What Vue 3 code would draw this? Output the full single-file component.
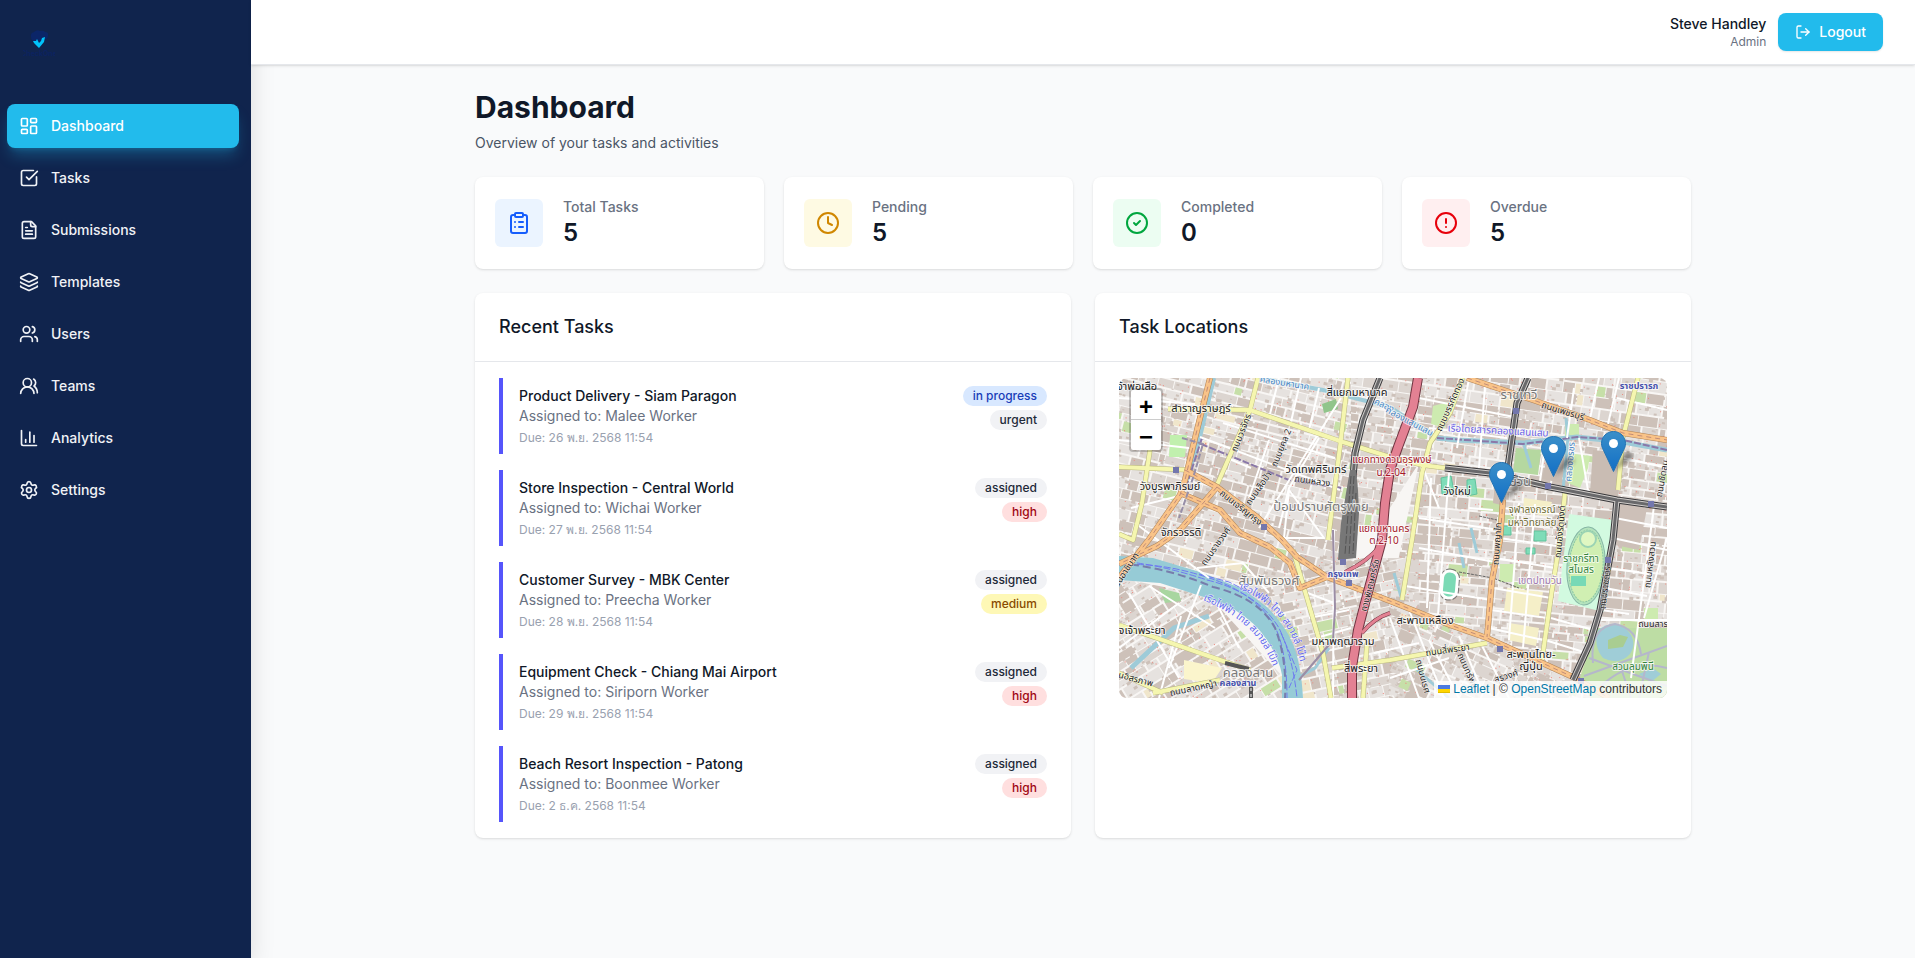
<script setup>
const nav = [
  { name: 'Dashboard', paths: ['M4 3h5a1 1 0 0 1 1 1v7a1 1 0 0 1-1 1H4a1 1 0 0 1-1-1V4a1 1 0 0 1 1-1z', 'M15 3h5a1 1 0 0 1 1 1v3a1 1 0 0 1-1 1h-5a1 1 0 0 1-1-1V4a1 1 0 0 1 1-1z', 'M15 12h5a1 1 0 0 1 1 1v7a1 1 0 0 1-1 1h-5a1 1 0 0 1-1-1v-7a1 1 0 0 1 1-1z', 'M4 16h5a1 1 0 0 1 1 1v3a1 1 0 0 1-1 1H4a1 1 0 0 1-1-1v-3a1 1 0 0 1 1-1z'] },
  { name: 'Tasks', paths: ['M21 10.656V19a2 2 0 0 1-2 2H5a2 2 0 0 1-2-2V5a2 2 0 0 1 2-2h12.344', 'm9 11 3 3L22 4'] },
  { name: 'Submissions', paths: ['M15 2H6a2 2 0 0 0-2 2v16a2 2 0 0 0 2 2h12a2 2 0 0 0 2-2V7Z', 'M14 2v4a2 2 0 0 0 2 2h4', 'M10 9H8', 'M16 13H8', 'M16 17H8'] },
  { name: 'Templates', paths: ['M12.83 2.18a2 2 0 0 0-1.66 0L2.6 6.08a1 1 0 0 0 0 1.83l8.58 3.91a2 2 0 0 0 1.66 0l8.58-3.9a1 1 0 0 0 0-1.83z', 'M2 12a1 1 0 0 0 .58.91l8.6 3.91a2 2 0 0 0 1.65 0l8.58-3.9A1 1 0 0 0 22 12', 'M2 17a1 1 0 0 0 .58.91l8.6 3.91a2 2 0 0 0 1.65 0l8.58-3.9A1 1 0 0 0 22 17'] },
  { name: 'Users', paths: ['M16 21v-2a4 4 0 0 0-4-4H6a4 4 0 0 0-4 4v2', 'M13 7a4 4 0 1 1-8 0 4 4 0 0 1 8 0z', 'M22 21v-2a4 4 0 0 0-3-3.87', 'M16 3.13a4 4 0 0 1 0 7.75'] },
  { name: 'Teams', paths: ['M18 21a8 8 0 0 0-16 0', 'M15 8a5 5 0 1 1-10 0 5 5 0 0 1 10 0z', 'M22 20c0-3.37-2-6.5-4-8a5 5 0 0 0-.45-8.3'] },
  { name: 'Analytics', paths: ['M3 3v16a2 2 0 0 0 2 2h16', 'M18 17V9', 'M13 17V5', 'M8 17v-3'] },
  { name: 'Settings', paths: ['M9.671 4.136a2.34 2.34 0 0 1 4.659 0 2.34 2.34 0 0 0 3.319 1.915 2.34 2.34 0 0 1 2.33 4.033 2.34 2.34 0 0 0 0 3.831 2.34 2.34 0 0 1-2.33 4.033 2.34 2.34 0 0 0-3.319 1.915 2.34 2.34 0 0 1-4.659 0 2.34 2.34 0 0 0-3.32-1.915 2.34 2.34 0 0 1-2.33-4.033 2.34 2.34 0 0 0 0-3.831A2.34 2.34 0 0 1 6.35 6.051a2.34 2.34 0 0 0 3.319-1.915', 'M15 12a3 3 0 1 1-6 0 3 3 0 0 1 6 0z'] },
]

const circle = 'M22 12a10 10 0 1 1-20 0 10 10 0 0 1 20 0z'
const stats = [
  { label: 'Total Tasks', value: 5, tone: 'blue', paths: ['M9 2h6a1 1 0 0 1 1 1v2a1 1 0 0 1-1 1H9a1 1 0 0 1-1-1V3a1 1 0 0 1 1-1z', 'M16 4h2a2 2 0 0 1 2 2v14a2 2 0 0 1-2 2H6a2 2 0 0 1-2-2V6a2 2 0 0 1 2-2h2', 'M12 11h4', 'M12 16h4', 'M8 11h.01', 'M8 16h.01'] },
  { label: 'Pending', value: 5, tone: 'amber', paths: [circle, 'M12 6v6l4 2'] },
  { label: 'Completed', value: 0, tone: 'green', paths: [circle, 'm9 12 2 2 4-4'] },
  { label: 'Overdue', value: 5, tone: 'red', paths: [circle, 'M12 8v4', 'M12 16h.01'] },
]

const tasks = [
  { title: 'Product Delivery - Siam Paragon', who: 'Malee Worker', due: '26 พ.ย. 2568 11:54', status: 'in progress', statusTone: 'blue', priority: 'urgent', tone: 'gray' },
  { title: 'Store Inspection - Central World', who: 'Wichai Worker', due: '27 พ.ย. 2568 11:54', status: 'assigned', statusTone: 'gray', priority: 'high', tone: 'red' },
  { title: 'Customer Survey - MBK Center', who: 'Preecha Worker', due: '28 พ.ย. 2568 11:54', status: 'assigned', statusTone: 'gray', priority: 'medium', tone: 'yellow' },
  { title: 'Equipment Check - Chiang Mai Airport', who: 'Siriporn Worker', due: '29 พ.ย. 2568 11:54', status: 'assigned', statusTone: 'gray', priority: 'high', tone: 'red' },
  { title: 'Beach Resort Inspection - Patong', who: 'Boonmee Worker', due: '2 ธ.ค. 2568 11:54', status: 'assigned', statusTone: 'gray', priority: 'high', tone: 'red' },
]

// City fabric: deterministic building footprints laid on a rotated street grid per district.
let seed = 7
const rnd = () => {
  seed = (seed * 16807) % 2147483647
  return seed / 2147483647
}
function fabric(w, h) {
  const out = { a: '', b: '', c: '', green: '', pink: '', mint: '' }
  let y = -h
  while (y < h) {
    const rowH = 6 + Math.floor(rnd() * 6)
    let x = -w
    while (x < w) {
      const colW = 5 + Math.floor(rnd() * 17)
      const cell = `M${x} ${y}h${colW}v${rowH}h${-colW}z`
      const r = rnd()
      if (r < 0.34) out.a += cell
      else if (r < 0.62) out.b += cell
      else if (r < 0.93) out.c += cell
      else if (r < 0.97) out.green += cell
      else out.mint += cell
      for (let i = 0; i < 3; i++) {
        const px = (x + rnd() * colW).toFixed(1)
        const py = (y + rnd() * rowH).toFixed(1)
        const s = 1 + Math.floor(rnd() * 3)
        if (rnd() < 0.3) out.pink += `M${px} ${py}h1v1h-1z`
        else out.a += `M${px} ${py}h${s + 1}v${s}h${-s - 1}z`
      }
      x += colW + 1 + Math.floor(rnd() * 2)
    }
    y += rowH + 1 + Math.floor(rnd() * 2)
  }
  return out
}
const districts = [
  { id: 'nw', clip: 'M0 0H232V190L120 205 0 180Z', at: 'translate(110 90) rotate(14)', f: fabric(150, 130) },
  { id: 'sw', clip: 'M0 200L90 218 165 300V320H0Z', at: 'translate(70 260) rotate(-32)', f: fabric(110, 100) },
  { id: 'mid', clip: 'M120 210L232 180H300V320H184Q175 240 120 210Z', at: 'translate(220 260) rotate(-12)', f: fabric(110, 90) },
  { id: 'ne', clip: 'M232 0H548V125L300 85 232 190Z', at: 'translate(400 60) rotate(8)', f: fabric(180, 110) },
  { id: 'se', clip: 'M300 85L548 125V320H460L270 225Z', at: 'translate(420 200) rotate(5)', f: fabric(160, 140) },
  { id: 's', clip: 'M270 225L460 303V320H270Z', at: 'translate(350 290) rotate(24)', f: fabric(110, 70) },
]

const lanes = [
  'M0 20L76 26M0 62L70 70M12 130L60 118M16 145L90 200M81 59L221 112M104 45L216 80M160 0L150 40M182 0L172 44M200 10L190 52M222 20L140 150',
  'M200 60L170 110 160 150M170 112L205 160 165 160 170 112M150 62L130 120M108 80L132 90M78 190L124 185 150 215M62 238L40 320M82 207L50 290',
  'M10 215L60 300M30 208L96 250M0 270L60 225M96 222L120 270M186 214L215 225M190 240L230 232M190 262L232 250M215 152L214 320',
  'M300 20L400 40M310 50L388 60M350 0L338 70M366 8L360 90M300 80L320 130M312 100L308 230M330 95L318 250M350 130L374 132M300 140L380 152M300 170L376 184M286 208L372 222',
  'M384 130L440 136M380 160L438 168M376 180L436 190M374 210L432 220M372 232L428 240M370 250L424 262M400 125L390 262M416 126L404 270M425 75L420 110M460 60L470 118M455 10L448 60M480 0L470 45M500 0L488 50',
  'M498 20L548 32M505 80L548 90M496 140L548 150M494 160L548 172M490 190L530 196M486 210L528 218M482 232L510 236M535 128L512 300M548 160L525 240M478 242H548M432 240L474 252M426 262L468 275',
  'M271 240L300 320M290 232L325 320M310 262L340 320M340 258L362 310M271 300L330 280M360 262L390 320M255 275L300 265',
]
const yellow = [
  'M49 31L131 32 224 64 271 79 303 87 326 90', 'M139 0L131 32 98 107', 'M229 0L221 69 209 162', 'M0 89L71 92', 'M31 72L23 125 14 162 0 156',
  'M344 0L331 35 311 65 303 95 293 162 283 222', 'M446 115L441 162 433 212 423 282', 'M519 0L504 59 499 112', 'M0 247L101 282 131 292',
  'M0 295L44 315M34 315L101 302', 'M174 172L204 275 212 320', 'M213 290L271 282 368 265', 'M248 265L244 320',
]
const orange = [
  'M91 0L78 52 66 102 61 117 31 160 0 200', 'M66 92L98 109 138 139 163 162 178 179 208 199 271 223 331 247 368 260 421 284 454 299 490 320',
  'M98 109L61 152 38 168 0 186', 'M61 115L101 132 121 155 151 169 171 185 181 210 208 199', 'M348 0L414 22 471 42 504 55 548 62', 'M384 122L381 162 373 202 368 259',
]
const motorway = ['M299 0L294 29 279 69 271 92 266 125 263 162 254 195 246 225 239 252 233 289V320', 'M271 235Q255 240 243 255M261 168Q248 184 226 194']
const elevated = [
  'M409 0L398 25 391 75 388 96', 'M326 90L371 95 431 109 498 122 548 129', 'M498 122L494 162 481 232 471 265 454 302', 'M261 0L244 42 236 75 234 100',
]
const stations = [[57, 92], [145, 149], [397, 33], [429, 108], [532, 126], [224, 184], [230, 205], [489, 182], [381, 271], [462, 303]]

const labels = [
  ['จ้าพ่อเสือ', 18, 12, 'place'], ['สำราญราษฎร์', 82, 34, 'place'], ['สี่แยกมหานาค', 238, 18, 'place'], ['วัดเทพศิรินทร์', 197, 95, 'place'],
  ['วังบูรพาภิรมย์', 51, 112, 'place'], ['จักรวรรดิ', 62, 158, 'place'], ['วังใหม่', 338, 117, 'place'], ['มหาพฤฒาราม', 224, 267, 'place'],
  ['สี่พระยา', 242, 294, 'place'], ['จเจ้าพระยา', 23, 256, 'place'], ['สะพานเหลือง', 306, 246, 'place'], ['สะพานไทย-', 412, 280, 'place'], ['ญี่ปุ่น', 412, 292, 'place'],
  ['ป้อมปราบศัตรูพ่าย', 202, 133, 'area'], ['ราชเทวี', 400, 21, 'area'], ['ปทุมวัน', 393, 108, 'area'], ['สัมพันธวงศ์', 150, 207, 'area'], ['คลองสาน', 129, 299, 'area'],
  ['แยกทางด่วนอุรุพงษ์', 273, 85, 'exit'], ['น.2-04', 272, 98, 'exit'], ['แยกมหานคร', 265, 154, 'exit'], ['ต.2-10', 265, 166, 'exit'],
  ['ราชปรารภ', 520, 11, 'station'], ['กรุงเทพ', 224, 199, 'station'], ['คลองสาน', 119, 308, 'station'],
  ['จุฬาลงกรณ์', 413, 135, 'campus'], ['มหาวิทยาลัย', 413, 148, 'campus'], ['ราชกรีฑา', 462, 184, 'park'], ['สโมสร', 462, 195, 'park'], ['สวนลุมพินี', 514, 292, 'park'],
  ['เขตปทุมวัน', 421, 206, 'district'],
  ['คลองมหานาค', 165, 8, 'water', 9], ['คลอง', 264, 30, 'water', 24], ['คลองแสนแสบ', 289, 46, 'water', 28], ['คลองอรชร', 454, 84, 'water', -85], ['เรือโดยสารคลองแสนแสบ', 379, 56, 'ferry', 3],
  ['ถนนวรจักร', 125, 56, 'street', -68], ['ถนนยุคล 2', 165, 71, 'street', -68], ['ถนนหลวง', 193, 106, 'street', 8], ['ถนนเสือป่า', 142, 112, 'street', -55], ['ถนนเจริญกรุง', 120, 132, 'street', 38],
  ['ถนนเพชรบุรี', 443, 36, 'street', 17], ['ถนนบรรทัดทอง', 334, 28, 'street', -66], ['ถนนอังรีดูนังต์', 444, 154, 'street', -85], ['ถนนพญาไท', 381, 166, 'street', -86], ['ถนนชิดลม', 546, 101, 'street', -80],
  ['ถนนราชวงศ์', 99, 170, 'street', -55], ['นอิสรภาพ', 16, 304, 'street', 15], ['ถนนลาดหญ้า', 75, 313, 'street', -12], ['ทางพิเศษศรีรัช', 254, 208, 'street', -76], ['ถนนอาชิบาท', 8, 196, 'street', -57],
  ['ถนนสี่พระยา', 329, 275, 'street', -8], ['ถนนนเรศ', 301, 299, 'street', 75], ['ถนนทรัพย์', 346, 294, 'street', 66], ['สุรวงศ์', 388, 301, 'street', -18], ['ถนนราชดำริ', 489, 210, 'street', -83], ['ถนนหลังสวน', 534, 187, 'street', -83], ['ถนนสาร', 534, 249, 'street'],
]
const pins = [[1, 382, 125], [2, 434, 99], [3, 494, 94]]
</script>

<template>
  <div class="shell">
    <aside class="sidebar">
      <a class="brand" href="#" aria-label="Home">
        <svg class="logo" viewBox="0 0 32 32" aria-hidden="true">
          <path d="M8 9q-1-4 3-5 3-3 6-1 4-1 5 1 4 0 3 4-1 4-4 3l-5 3-5-1q-3 0-3-4z" fill="#0b2568" />
          <path d="M10 13h3l1-2 2 4 2-2 1-3 3-1-1 5-5 6-5-5z" fill="#00c3fb" />
          <text class="logo-text" x="16" y="28">CheckOne</text>
        </svg>
      </a>
      <nav class="nav" aria-label="Main">
        <a v-for="(item, i) in nav" :key="item.name" href="#" class="nav-link" :class="{ active: i === 0 }">
          <svg class="icon" viewBox="0 0 24 24" aria-hidden="true"><path v-for="p in item.paths" :key="p" :d="p" /></svg>
          <span>{{ item.name }}</span>
        </a>
      </nav>
    </aside>

    <div class="content">
      <header class="topbar">
        <div class="user">
          <span class="user-name">Steve Handley</span>
          <span class="user-role">Admin</span>
        </div>
        <button class="logout" type="button">
          <svg class="icon icon-sm" viewBox="0 0 24 24" aria-hidden="true"><path d="m16 17 5-5-5-5" /><path d="M21 12H9" /><path d="M9 21H5a2 2 0 0 1-2-2V5a2 2 0 0 1 2-2h4" /></svg>
          Logout
        </button>
      </header>

      <main class="main">
        <h1>Dashboard</h1>
        <p class="lead">Overview of your tasks and activities</p>

        <section class="stats">
          <div v-for="s in stats" :key="s.label" class="card stat">
            <div class="stat-icon" :class="'stat-' + s.tone">
              <svg class="icon icon-lg" viewBox="0 0 24 24" aria-hidden="true"><path v-for="p in s.paths" :key="p" :d="p" /></svg>
            </div>
            <div>
              <div class="stat-label">{{ s.label }}</div>
              <div class="stat-value">{{ s.value }}</div>
            </div>
          </div>
        </section>

        <div class="panels">
          <section class="card">
            <h2>Recent Tasks</h2>
            <ul class="tasks">
              <li v-for="t in tasks" :key="t.title" class="task">
                <div>
                  <div class="task-title">{{ t.title }}</div>
                  <div class="task-who">Assigned to: {{ t.who }}</div>
                  <div class="task-due">Due: {{ t.due }}</div>
                </div>
                <div class="badges">
                  <span class="badge" :class="'badge-' + t.statusTone">{{ t.status }}</span>
                  <span class="badge" :class="'badge-' + t.tone">{{ t.priority }}</span>
                </div>
              </li>
            </ul>
          </section>

          <section class="card">
            <h2>Task Locations</h2>
            <div class="map-wrap">
              <div class="map">
                <svg class="map-art" viewBox="0 0 548 320" preserveAspectRatio="xMidYMid slice" lang="th" role="img" aria-label="Bangkok map">
                  <defs>
                    <clipPath v-for="d in districts" :id="'clip-' + d.id" :key="d.id"><path :d="d.clip" /></clipPath>
                    <linearGradient id="pin-fill" x1="0" y1="0" x2="0" y2="1"><stop offset="0" stop-color="#3a8fc9" /><stop offset="1" stop-color="#126fc6" /></linearGradient>
                    <filter id="soft" x="-50%" y="-50%" width="200%" height="200%"><feGaussianBlur stdDeviation="2" /></filter>
                    <path id="ferry-upper" d="M120 211Q150 222 167 248 180 268 184 300" />
                    <path id="ferry-lower" d="M84 222Q118 236 137 258 149 272 158 300" />
                  </defs>
                  <rect width="548" height="320" fill="#f8f6f4" />
                  <g v-for="d in districts" :key="d.id" :clip-path="`url(#clip-${d.id})`">
                    <g :transform="d.at">
                      <path :d="d.f.c" fill="#e6e2df" /><path :d="d.f.b" fill="#dcd5d0" /><path :d="d.f.a" fill="#cdc1b9" />
                      <path :d="d.f.green" fill="#c6dfa8" /><path :d="d.f.mint" fill="#f0e6cb" /><path :d="d.f.pink" fill="#ee8b80" />
                    </g>
                  </g>

                  <g fill="#cdebb0">
                    <path d="M51 57h17l-2 22H50z" fill="#c1f0ae" />
                    <path d="M397 70l25 2-3 25-25-3z" fill="#b5d8a0" />
                    <path d="M449 75l22 3-2 12-8 20-12-5z" /><path d="M446 46h14v12h-14z" />
                    <path d="M450 136l44 6-9 92-46-11z" fill="#d2fae0" />
                    <path d="M381 186h16l-3 18h-14z" /><path d="M478 250h70v70h-76l-12-18z" fill="#bddda4" />
                    <path d="M525 230h14v12h-14z" /><path d="M40 210l20 5 2 8-16 2z" fill="#a8d6a0" />
                    <path d="M203 26l14-5 2 10-14 4z" fill="#91c58b" />
                    <path d="M314 28l15-4-3 26-14-4z" />
                  </g>
                  <path d="M65 282l38 8-10 15-28-4z" fill="#fbf5cc" />
                  <path d="M405 120l28 4-5 14-24-4zM388 210l36 4-4 24-35-5zM390 245l30 5-3 18-28-6z" fill="#f5efc8" />
                  <path d="M76 113l22 6-10 14-20-7zM474 72l30 3-5 45-28-6zM430 70l16 2-3 33-20-4zM376 88l14 4-4 36-12-3z" fill="#c9bcb3" />
                  <path d="M500 124l28 6-8 42-24-5z" fill="#cdc0b8" />
                  <path d="M322 100l10-2 3 16-12 2zM348 102l8-1 2 15-10 2zM415 153h12v10h-12zM380 148h12v9h-12zM407 170h9v6h-9z" fill="#7fdcb8" stroke="#61c29c" />

                  <ellipse cx="467" cy="188" rx="19" ry="39" fill="#b4e3bd" stroke="#85b5a4" transform="rotate(4 467 188)" />
                  <ellipse cx="467" cy="188" rx="17" ry="36" fill="#d0efb2" stroke="#8cc7a4" stroke-dasharray="2 1" transform="rotate(4 467 188)" />
                  <path d="M452 198h15v10h-15z" fill="#77d9b6" /><circle cx="469" cy="161" r="8" fill="#e0f7c2" stroke="#9bd3b4" stroke-width="2" />
                  <rect x="323" y="193" width="15" height="27" rx="7" fill="#7bdab5" stroke="#fff" stroke-width="3" transform="rotate(5 330 206)" />
                  <rect x="321" y="191" width="19" height="31" rx="9" fill="none" stroke="#777" stroke-dasharray="6 2" transform="rotate(5 330 206)" />

                  <path d="M479 252Q495 240 508 252 519 264 511 276 500 288 484 280 474 268 479 252Z" fill="#9fcdd7" />
                  <path d="M489 262l12-5 8 2-5 10-15 2z" fill="#a9cd91" />
                  <path d="M520 296l14-6 8 6-10 8z" fill="#9fcdd7" />
                  <path d="M474 285Q470 250 496 246 518 250 522 276M465 298L548 268M470 280L525 300 548 308M500 284L512 320M530 274L520 320M480 310Q510 280 548 290" fill="none" stroke="#b5b7cb" stroke-width="2" />

                  <g fill="none" stroke="#9ecbd8">
                    <path d="M141 0L204 12 271 29 318 60" stroke-width="4" /><path d="M318 60L338 62 404 65 458 59 504 64 548 72" stroke-width="5" />
                    <path d="M95 0L81 59 66 108" stroke-width="4" /><path d="M12 290L55 250 90 238" stroke-width="5" />
                    <path d="M447 40L449 60 444 112" stroke-width="3" /><path d="M210 270L196 290 178 300M283 222L275 195" stroke-width="3" />
                    <path d="M405 67L412 90M340 165L345 190M352 150L358 175M296 290L330 320" stroke-width="3" />
                  </g>
                  <path d="M0 178L34 180 81 194 124 211 148 229Q166 247 174 266T184 320H163V297Q160 280 148 262T116 232L88 220 41 205 0 202Z" fill="#96cbd6" />
                  <path d="M0 183Q40 186 88 202 138 214 160 250 174 280 178 320M0 187Q40 184 84 198 132 212 154 245 168 270 168 320M80 196L110 204 130 214M162 255L178 292 170 310" fill="none" stroke="#6f7af0" stroke-dasharray="7 2" />
                  <path d="M0 185Q50 190 94 209 140 220 156 250 168 280 166 320" fill="none" stroke="#777dac" stroke-width="2" stroke-dasharray="8 4" />
                  <path d="M318 60L404 66 458 59 504 62 548 72M83 60L66 112M82 66L170 102 222 110" fill="none" stroke="#8a78a8" stroke-width="2" stroke-dasharray="7 2" />

                  <g fill="none" stroke-linejoin="round">
                    <path v-for="p in lanes" :key="p" :d="p" stroke="#fff" stroke-width="2" />
                    <path d="M340 194L374 200 400 210M360 138l18 4" stroke="#666" stroke-dasharray="3 1" />
                    <path v-for="p in yellow" :key="'yc' + p" :d="p" stroke="#b9b77e" stroke-width="5" />
                    <path v-for="p in yellow" :key="'y' + p" :d="p" stroke="#f5f6af" stroke-width="4" />
                    <path v-for="p in orange" :key="'oc' + p" :d="p" stroke="#b28355" stroke-width="6" />
                    <path v-for="p in orange" :key="'o' + p" :d="p" stroke="#f9c388" stroke-width="5" />
                    <path v-for="p in orange" :key="'od' + p" :d="p" stroke="#c08c79" stroke-dasharray="5 4" />
                    <path d="M63 60L84 66 74 100 60 140" stroke="#978fa8" stroke-width="2" stroke-dasharray="6 2" />
                    <path d="M214 152L216 230 214 262 180 302" stroke="#9b8da5" stroke-width="2" />
                    <path v-for="(p, i) in motorway" :key="'mc' + p" :d="p" stroke="#6e3440" :stroke-width="i ? 4 : 10" />
                    <path v-for="(p, i) in motorway" :key="'m' + p" :d="p" stroke="#e38193" :stroke-width="i ? 3 : 8" />
                    <path v-for="p in elevated" :key="'ec' + p" :d="p" stroke="#38383b" stroke-width="7" />
                    <path v-for="p in elevated" :key="'e' + p" :d="p" stroke="#d0cdca" stroke-width="5" />
                    <path v-for="p in elevated" :key="'ed' + p" :d="p" stroke="#69696b" stroke-width="3" />
                    <path d="M132 304V320M106 285L130 291" stroke="#555" stroke-width="4" /><path d="M132 304V320" stroke="#fff" stroke-dasharray="3 3" />
                  </g>
                  <path d="M231 92L237 92 239 112 240 135 237 180 219 182 222 145 227 115Z" fill="#777" />
                  <path d="M232 98L226 176M235 98L230 178M237 115L234 176" fill="none" stroke="#555" stroke-dasharray="8 2" />
                  <rect v-for="s in stations" :key="s.join()" :x="s[0] - 3" :y="s[1] - 3" width="6" height="6" fill="#7377ad" />

                  <text v-for="l in labels" :key="l.join()" :class="'t-' + l[3]" :transform="`translate(${l[1]} ${l[2]}) rotate(${l[4] || 0})`">{{ l[0] }}</text>
                  <text class="t-boat"><textPath href="#ferry-upper">เรือไฟฟ้า ไทย สมายล์ โบ๊ท</textPath></text>
                  <text class="t-boat"><textPath href="#ferry-lower">เรือไฟฟ้า ไทย สมายล์ โบ๊ท</textPath></text>

                  <g v-for="p in pins" :key="p[0]" :transform="`translate(${p[1] - 12} ${p[2] - 41})`">
                    <path d="M13 40L26 20 34 25Z" fill="#222" opacity=".5" filter="url(#soft)" />
                    <path d="M12.500.500C5.800.500.500 5.800.500 12.500c0 2.400.700 4.500 1.900 6.600L12.500 40.500l10.100-21.400c1.200-2.100 1.900-4.200 1.900-6.600C24.500 5.800 19.200.500 12.500.500z" fill="url(#pin-fill)" stroke="#2474b4" />
                    <circle cx="12.500" cy="12.500" r="4.500" fill="#fff" />
                  </g>
                </svg>
                <div class="zoom">
                  <button type="button" aria-label="Zoom in">+</button>
                  <button type="button" aria-label="Zoom out">−</button>
                </div>
                <div class="credit">
                  <svg class="flag" viewBox="0 0 12 8" aria-hidden="true"><path fill="#4c7be1" d="M0 0h12v4H0z" /><path fill="#ffd500" d="M0 4h12v3H0z" /><path fill="#e0bc00" d="M0 7h12v1H0z" /></svg>
                  <a href="#">Leaflet</a> | © <a href="#">OpenStreetMap</a> contributors
                </div>
              </div>
            </div>
          </section>
        </div>
      </main>
    </div>
  </div>
</template>

<style>
body { margin: 0; background: #f9fafb; }
</style>

<style scoped>
* { box-sizing: border-box; }
.shell { display: flex; min-height: 100vh; background: #f9fafb; color: #101828; font: 14px/20px Inter, "Noto Sans", sans-serif; }
.sidebar { flex: 0 0 251px; background: #10244d; box-shadow: 0 8px 24px rgba(0, 0, 0, 0.12); }
.brand { display: block; padding: 28px 23px 0; height: 104px; }
.logo { display: block; width: 32px; height: 32px; }
.nav { display: flex; flex-direction: column; gap: 8px; padding: 0 12px 0 7px; }
.nav-link { display: flex; align-items: center; gap: 12px; height: 44px; padding: 0 12px; border-radius: 8px; color: #f0f2f6; font-weight: 500; text-decoration: none; }
.nav-link.active { background: #22bbec; color: #fff; box-shadow: 0 10px 15px -3px rgba(34, 187, 236, 0.3), 0 4px 6px -4px rgba(34, 187, 236, 0.3); }
.icon { flex: none; width: 20px; height: 20px; fill: none; stroke: currentColor; stroke-width: 2; stroke-linecap: round; stroke-linejoin: round; }
.icon-sm { width: 16px; height: 16px; }
.icon-lg { width: 24px; height: 24px; }
.content { flex: 1; min-width: 0; }
.topbar { position: relative; display: flex; align-items: center; justify-content: flex-end; gap: 12px; height: 65px; padding: 0 32px; background: #fff; border-bottom: 1px solid #e5e7eb; box-shadow: 0 1px 3px rgba(0, 0, 0, 0.1), 0 1px 2px -1px rgba(0, 0, 0, 0.1); }
.user { display: flex; flex-direction: column; align-items: flex-end; }
.user-name { font-weight: 500; }
.user-role { font-size: 12px; line-height: 16px; color: #6a7282; }
.logout { display: flex; align-items: center; gap: 8px; height: 38px; padding: 0 17px; border: 0; border-radius: 8px; background: #22bbec; color: #fff; font: inherit; font-weight: 500; box-shadow: 0 1px 2px rgba(0, 0, 0, 0.1); }
.main { max-width: 1280px; margin: 0 auto; padding: 24px 32px; }
h1 { margin: 0; font-size: 30px; line-height: 36px; font-weight: 700; }
.lead { margin: 8px 0 24px; color: #4a5565; }
.card { min-width: 0; background: #fff; border-radius: 8px; box-shadow: 0 1px 3px rgba(0, 0, 0, 0.1), 0 1px 2px -1px rgba(0, 0, 0, 0.1); }
.stats { display: grid; grid-template-columns: repeat(4, 1fr); gap: 20px; margin-bottom: 24px; }
.stat { display: flex; align-items: center; gap: 20px; padding: 20px; }
.stat-icon { display: grid; place-items: center; width: 48px; height: 48px; border-radius: 6px; }
.stat-blue { background: #ebf4ff; color: #155dfc; }
.stat-amber { background: #fefae3; color: #d08700; }
.stat-green { background: #ecfdf2; color: #00a63e; }
.stat-red { background: #ffeff0; color: #e7000b; }
.stat-label { font-weight: 500; color: #6a7282; }
.stat-value { font-size: 24px; line-height: 32px; font-weight: 600; }
.panels { display: grid; grid-template-columns: 1fr 1fr; gap: 24px; }
h2 { margin: 0; padding: 20px 24px; border-bottom: 1px solid #e5e7eb; font-size: 18px; line-height: 28px; font-weight: 500; }
.tasks { display: flex; flex-direction: column; gap: 16px; margin: 0; padding: 16px 24px; list-style: none; }
.task { display: flex; justify-content: space-between; padding: 8px 0 8px 16px; border-left: 4px solid #5655fb; }
.task-title { font-weight: 500; }
.task-who { color: #6a7282; }
.task-due { margin-top: 4px; font-size: 12px; line-height: 16px; color: #99a1af; }
.badges { display: flex; flex-direction: column; align-items: flex-end; gap: 4px; }
.badge { padding: 2px 10px; border-radius: 10px; font-size: 12px; line-height: 16px; font-weight: 500; }
.badge-blue { background: #d8e8ff; color: #193cb8; }
.badge-gray { background: #f1f2f5; color: #1e2939; }
.badge-red { background: #ffdfdf; color: #9f0712; }
.badge-yellow { background: #fef8b6; color: #894b00; }
.map-wrap { padding: 16px 24px; }
.map { position: relative; height: 320px; overflow: hidden; border-radius: 8px; }
.map-art { display: block; width: 100%; height: 100%; }
.zoom { position: absolute; top: 10px; left: 10px; width: 34px; border: 2px solid rgba(0, 0, 0, 0.2); border-radius: 4px; background: #fff; background-clip: padding-box; }
.zoom button { display: block; width: 30px; height: 30px; padding: 4px 0 0; border: 0; background: none; color: #000; font: bold 24px/26px "Liberation Sans", sans-serif; }
.zoom button:first-child { border-bottom: 1px solid #ccc; }
.credit { position: absolute; right: 0; bottom: 0; padding: 0 5px 0 4px; background: rgba(255, 255, 255, 0.8); color: #333; font: 12px/17px "Liberation Sans", sans-serif; white-space: nowrap; }
.credit a { color: #0078a8; text-decoration: none; }
.flag { width: 12px; height: 8px; margin-right: 3px; }
text { font-family: "Noto Sans", "Noto Sans Thai", sans-serif; font-size: 10px; text-anchor: middle; fill: #222; paint-order: stroke; stroke: rgba(255, 255, 255, 0.7); stroke-width: 2px; stroke-linejoin: round; }
.logo-text { font: bold 7px Inter, sans-serif; fill: #0c2360; stroke: none; }
.t-place { font-size: 11px; }
.t-area { font-size: 13px; fill: #777; }
.t-street { font-size: 9px; stroke-width: 1px; }
.t-exit { fill: #a5192b; }
.t-station { font-size: 9px; font-weight: 700; fill: #4753ad; }
.t-campus { fill: #6f6c36; }
.t-park { fill: #35853c; }
.t-district { fill: #a07ab0; }
.t-water { font-size: 9px; fill: #4a86c4; }
.t-ferry { font-size: 10px; fill: #6a62e8; }
.t-boat { font-size: 10px; text-anchor: start; fill: #6268ee; stroke-width: 1px; }
</style>
